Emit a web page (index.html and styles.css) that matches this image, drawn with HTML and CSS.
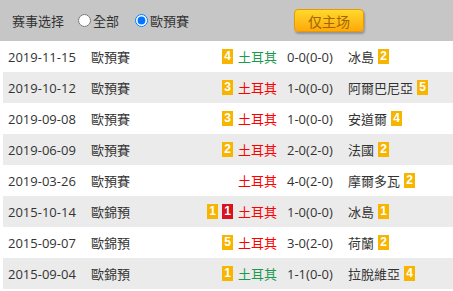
FILE: index.html
```html
<!DOCTYPE html>
<html lang="zh-TW">
<head>
    <meta charset="UTF-8">
    <title>對賽往績</title>
    <link rel="stylesheet" href="styles.css">
</head>
<body>
    <div class="filter">
        <span class="filter-title">赛事选择</span>
        <label class="opt opt-all"><input type="radio" name="lg">全部</label>
        <label class="opt opt-lg"><input type="radio" name="lg" checked>歐預賽</label>
        <button class="btn-home">仅主场</button>
    </div>

    <div class="list">
        <div class="row">
            <span class="date">2019-11-15</span><span class="league">歐預賽</span>
            <span class="home"><i class="rk">4</i><b class="win">土耳其</b></span>
            <span class="score">0-0(0-0)</span>
            <span class="away">冰島<i class="rk">2</i></span>
        </div>
        <div class="row">
            <span class="date">2019-10-12</span><span class="league">歐預賽</span>
            <span class="home"><i class="rk">3</i><b class="lose">土耳其</b></span>
            <span class="score">1-0(0-0)</span>
            <span class="away">阿爾巴尼亞<i class="rk">5</i></span>
        </div>
        <div class="row">
            <span class="date">2019-09-08</span><span class="league">歐預賽</span>
            <span class="home"><i class="rk">3</i><b class="lose">土耳其</b></span>
            <span class="score">1-0(0-0)</span>
            <span class="away">安道爾<i class="rk">4</i></span>
        </div>
        <div class="row">
            <span class="date">2019-06-09</span><span class="league">歐預賽</span>
            <span class="home"><i class="rk">2</i><b class="lose">土耳其</b></span>
            <span class="score">2-0(2-0)</span>
            <span class="away">法國<i class="rk">2</i></span>
        </div>
        <div class="row">
            <span class="date">2019-03-26</span><span class="league">歐預賽</span>
            <span class="home"><b class="lose">土耳其</b></span>
            <span class="score">4-0(2-0)</span>
            <span class="away">摩爾多瓦<i class="rk">2</i></span>
        </div>
        <div class="row">
            <span class="date">2015-10-14</span><span class="league">歐錦預</span>
            <span class="home"><i class="rk">1</i><i class="rk red">1</i><b class="lose">土耳其</b></span>
            <span class="score">1-0(0-0)</span>
            <span class="away">冰島<i class="rk">1</i></span>
        </div>
        <div class="row">
            <span class="date">2015-09-07</span><span class="league">歐錦預</span>
            <span class="home"><i class="rk">5</i><b class="lose">土耳其</b></span>
            <span class="score">3-0(2-0)</span>
            <span class="away">荷蘭<i class="rk">2</i></span>
        </div>
        <div class="row">
            <span class="date">2015-09-04</span><span class="league">歐錦預</span>
            <span class="home"><i class="rk">1</i><b class="win">土耳其</b></span>
            <span class="score">1-1(0-0)</span>
            <span class="away">拉脫維亞<i class="rk">4</i></span>
        </div>
    </div>
</body>
</html>
```

FILE: styles.css
```css
body {
    margin: 0;
    background: #fff;
    font-family: "Open Sans", "Noto Sans CJK TC", sans-serif;
    font-size: 13px;
    color: #333;
}

.filter {
    height: 41px;
    background: #c6c6c6;
    display: flex;
    align-items: center;
    padding-left: 12px;
    box-sizing: border-box;
}

.filter-title {
    width: 66px;
    flex: none;
}

.opt {
    display: flex;
    align-items: center;
    flex: none;
}

.opt-all {
    width: 57px;
}

.opt-lg {
    width: 159px;
}

.opt input {
    margin: 0 2px 0 0;
    width: 13px;
    height: 13px;
}

.btn-home {
    flex: none;
    width: 70px;
    height: 23px;
    border: 1px solid #e79b00;
    border-radius: 4px;
    background: linear-gradient(#ffd92c, #ffa80a);
    color: #a06600;
    font-family: "Noto Sans CJK SC", sans-serif;
    font-size: 14px;
    box-shadow: 1px 2px 2px rgba(0, 0, 0, 0.25);
    padding: 0;
}

.list {
    margin-left: 3px;
}

.row {
    height: 31px;
    display: grid;
    grid-template-columns: 83px 60px 126px 61px 1fr;
    align-items: center;
    padding-left: 5px;
}

.row:nth-child(even) {
    background: #ebebeb;
}

.score {
    padding-left: 10px;
}

.away {
    padding-left: 10px;
    display: flex;
    align-items: center;
}

.home {
    display: flex;
    justify-content: flex-end;
    align-items: center;
}

.home b {
    font-weight: normal;
}

.win {
    color: #1c9a4e;
    margin-left: 5px;
}

.lose {
    color: #f00;
    margin-left: 5px;
}

.rk {
    font-style: normal;
    display: inline-block;
    width: 11px;
    height: 15px;
    line-height: 15px;
    text-align: center;
    background: #f7b500;
    color: #fff;
    font-weight: bold;
    font-size: 12px;
    font-family: "Liberation Sans", sans-serif;
}

.home .rk + .rk {
    margin-left: 4px;
}

.away .rk {
    margin-left: 4px;
}

.rk.red {
    background: #d7141f;
}
```
